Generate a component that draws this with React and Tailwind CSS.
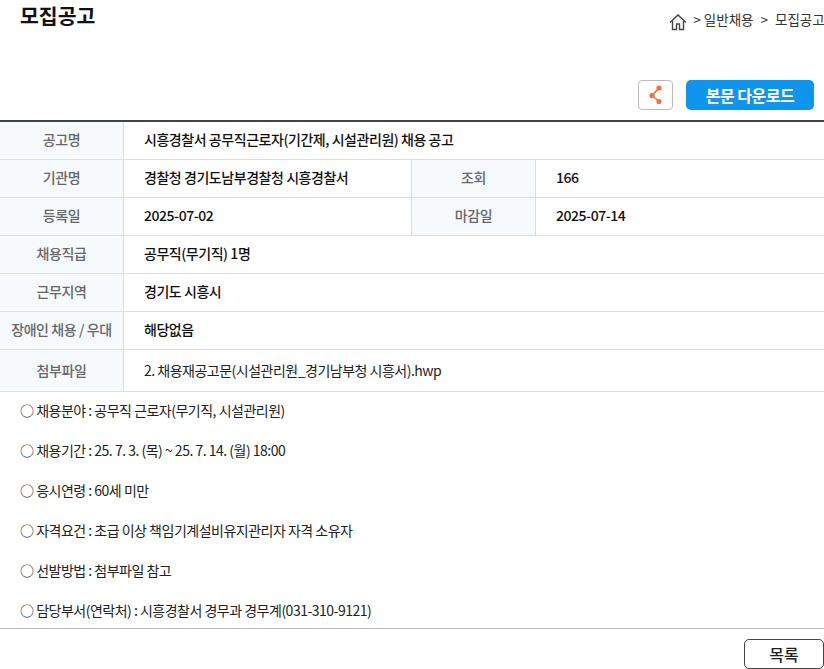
const cjk = "font-['Noto_Sans_CJK_KR','Noto_Sans',sans-serif]";

function Label({ children, className = 'pb-[2px]' }) {
    return (
        <div className={`w-[124px] shrink-0 bg-[#f7fafd] border-r border-[#dddddd] flex items-center justify-center text-[14px] tracking-[-0.4px] font-medium text-[#666666] ${className}`}>
            {children}
        </div>
    );
}

function Value({ children, className = '' }) {
    return <div className={`flex-1 pl-5 pb-[2px] flex items-center text-[14px] tracking-[-0.45px] font-medium text-[#111111] ${className}`}>{children}</div>;
}

const details = [
    '채용분야 : 공무직 근로자(무기직, 시설관리원)',
    '채용기간 : 25. 7. 3. (목) ~ 25. 7. 14. (월) 18:00',
    '응시연령 : 60세 미만',
    '자격요건 : 초급 이상 책임기계설비유지관리자 자격 소유자',
    '선발방법 : 첨부파일 참고',
    '담당부서(연락처) : 시흥경찰서 경무과 경무계(031-310-9121)',
];

export default function App() {
    return (
        <div className={`w-[824px] h-[669px] overflow-hidden bg-white ${cjk}`}>
            <div className="h-[80px] flex justify-between pl-5">
                <h1 className="text-[20.5px] font-bold leading-[30px] text-[#111111]">모집공고</h1>
                <div className="flex items-center h-[20px] mt-[9px] text-[13.5px] text-[#333333] whitespace-nowrap">
                    <svg className="w-[18px] h-[18px] mr-[6px] mt-[6px]" viewBox="0 0 18 18" fill="none" stroke="#444444" strokeWidth="1.4">
                        <path d="M1 9.5 9 2l8 7.5" />
                        <path d="M3.5 8v8.5h4V11h3v5.5h4V8" />
                    </svg>
                    <span>&gt; 일반채용</span>
                    <span className="ml-[7px]">&gt;</span>
                    <span className="ml-[7px] w-[49px] overflow-hidden">모집공고</span>
                </div>
            </div>
            <div className="h-[40px] flex justify-end items-start gap-[13px] pr-[10px]">
                <button className="w-[35px] h-[30px] border border-[#bbbbbb] rounded-[4px] flex items-center justify-center">
                    <svg className="w-[14px] h-[20px]" viewBox="0 0 14 20" fill="#ee7240" stroke="#ee7240">
                        <path d="M10 3 3 10.5l7 6" fill="none" strokeWidth="1.6" />
                        <circle cx="10" cy="3" r="2.6" stroke="none" />
                        <circle cx="3" cy="10.5" r="2.6" stroke="none" />
                        <circle cx="10" cy="16.5" r="2.6" stroke="none" />
                    </svg>
                </button>
                <button className="w-[128px] h-[30px] bg-[#0f96ec] rounded-[5px] text-white text-[16px] tracking-[-0.5px] font-bold">본문 다운로드</button>
            </div>
            <div className="border-t-2 border-[#444444]">
                <div className="flex h-[38px] border-b border-[#dddddd]">
                    <Label>공고명</Label>
                    <Value>시흥경찰서 공무직근로자(기간제, 시설관리원) 채용 공고</Value>
                </div>
                <div className="flex h-[38px] border-b border-[#dddddd]">
                    <Label>기관명</Label>
                    <Value className="border-r border-[#dddddd] max-w-[288px]">경찰청 경기도남부경찰청 시흥경찰서</Value>
                    <Label>조회</Label>
                    <Value>166</Value>
                </div>
                <div className="flex h-[38px] border-b border-[#dddddd]">
                    <Label>등록일</Label>
                    <Value className="border-r border-[#dddddd] max-w-[288px]">2025-07-02</Value>
                    <Label>마감일</Label>
                    <Value>2025-07-14</Value>
                </div>
                <div className="flex h-[38px] border-b border-[#dddddd]">
                    <Label>채용직급</Label>
                    <Value>공무직(무기직) 1명</Value>
                </div>
                <div className="flex h-[38px] border-b border-[#dddddd]">
                    <Label>근무지역</Label>
                    <Value>경기도 시흥시</Value>
                </div>
                <div className="flex h-[38px] border-b border-[#dddddd]">
                    <Label>장애인 채용 / 우대</Label>
                    <Value>해당없음</Value>
                </div>
                <div className="flex h-[42px] border-b border-[#dddddd]">
                    <Label className="pb-0">첨부파일</Label>
                    <div className="flex-1 pl-5 flex items-center text-[14px] tracking-[-0.5px] text-[#222222]">2. 채용재공고문(시설관리원_경기남부청 시흥서).hwp</div>
                </div>
            </div>
            <div className="h-[237px] pl-5 border-b border-[#bbbbbb] text-[14px] tracking-[-0.5px] text-[#222222]">
                {details.map((line) => (
                    <p key={line} className="h-[40px] leading-[36px]">○ {line}</p>
                ))}
            </div>
            <div className="flex justify-end pt-[10px]">
                <button className="w-[80px] h-[30px] border border-[#444444] rounded-[5px] text-[16px] font-medium text-[#222222]">목록</button>
            </div>
        </div>
    );
}
